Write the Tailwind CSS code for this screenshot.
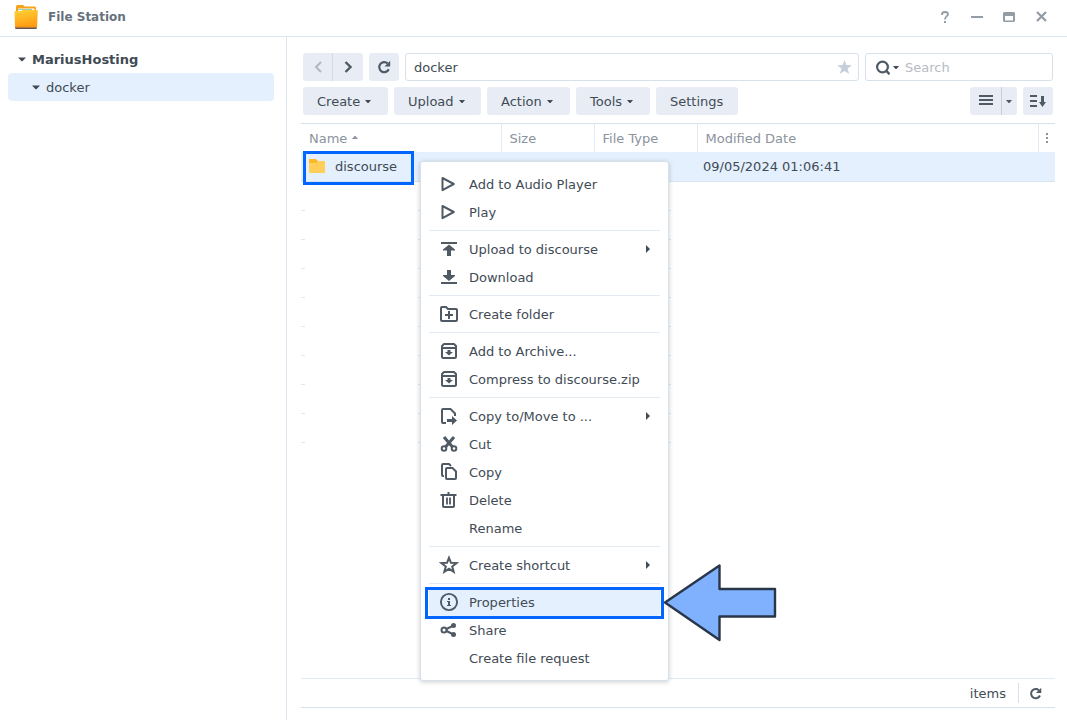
<!DOCTYPE html>
<html lang="en">
<head>
<meta charset="utf-8">
<meta name="viewport" content="width=device-width, initial-scale=1">
<title>File Station</title>
<script src="https://cdn.jsdelivr.net/npm/@tailwindcss/browser@4"></script>
</head>
<body class="relative flex h-screen flex-col overflow-hidden bg-white font-['Verdana','DejaVu_Sans',sans-serif] text-[13px] leading-7 text-[#414b55]">

<svg class="hidden" aria-hidden="true">
  <symbol id="caret" viewBox="0 0 6 3"><path d="M0 0h6L3.500 3h-1z" fill="currentColor"/></symbol>
  <symbol id="tree" viewBox="0 0 9 5"><path d="M0 0.300h9L5 4.500H4z" fill="currentColor"/></symbol>
  <symbol id="reload" viewBox="0 0 14 14"><path d="M11.800 9.200A5 5 0 1 1 10.600 3.400" fill="none" stroke="currentColor" stroke-width="2.200"/><path d="M13.200 0.800V6.500H7.500z" fill="currentColor"/></symbol>
  <symbol id="play" viewBox="0 0 20 20"><path d="M3.500 4v12.200L14.800 10z" fill="none" stroke="currentColor" stroke-width="2" stroke-linejoin="round"/></symbol>
  <symbol id="archive" viewBox="0 0 20 20"><path d="M5 3h10l2 2v10.500a1.500 1.500 0 0 1-1.500 1.500h-11A1.500 1.500 0 0 1 3 15.500V5z M3 7h14" fill="none" stroke="currentColor" stroke-width="2" stroke-linejoin="round"/><path d="M8.500 9h3v2H14l-4 3.500L6 11h2.500z" fill="currentColor"/></symbol>
</svg>

<header class="flex h-[37px] shrink-0 items-center border-b border-[#dde5ee] pl-3.5 pr-[18px]">
  <svg class="mt-[-3px] h-[26px] w-6" viewBox="0 0 24 26" aria-hidden="true">
    <defs><linearGradient id="fg" x1="0" y1="0" x2=".3" y2="1"><stop offset="0" stop-color="#ffd338"/><stop offset="1" stop-color="#ff9c14"/></linearGradient></defs>
    <path d="M2 2.500Q2 1 3.500 1H9q1 0 1.500 1.500H21q1 0 1 1.500v6H2z" fill="#f7a21b"/>
    <path d="M4 4.500h16.500V9H4z" fill="#fff"/><path d="M4 5.500h14" stroke="#8ed0b8"/>
    <path d="M0.500 8q0-1 1-1H7l2-1h14q1 0 .8 1.500L23 23.500H1z" fill="url(#fg)"/>
    <path d="M1 22.500h22v1H1z" fill="#ef8a10"/><path d="M1 23.500h22l-.5 1.500h-21z" fill="#6b5143"/>
  </svg>
  <h1 class="ml-2.5 mt-[-3px] text-xs font-bold text-[#66717c]">File Station</h1>
  <div class="mt-[-3px] ml-auto flex items-center gap-4 text-[#949ca6]">
    <button class="flex size-4 items-center justify-center" aria-label="Help"><svg class="h-3 w-2" viewBox="0 0 8 12"><path d="M1 4V3.500C1 1.800 2.200 1 4 1s3 .8 3 2.300C7 5.200 4 5.200 4 8.500" fill="none" stroke="currentColor" stroke-width="1.800"/><path d="M3 10h2v2H3z" fill="currentColor"/></svg></button>
    <button class="flex size-4 items-center justify-center" aria-label="Minimize"><span class="h-0.5 w-3 bg-current"></span></button>
    <button class="flex size-4 items-center justify-center" aria-label="Maximize"><svg class="h-2.5 w-3" viewBox="0 0 12 10"><path d="M1 0h10l1 1v8l-1 1H1L0 9V1zM2 4v4.500h8V4z" fill="currentColor" fill-rule="evenodd"/></svg></button>
    <button class="flex size-4 items-center justify-center" aria-label="Close"><svg class="size-[11px]" viewBox="0 0 11 11"><path d="M1 1l9 9M10 1L1 10" stroke="currentColor" stroke-width="2.300"/></svg></button>
  </div>
</header>

<div class="flex min-h-0 flex-1">
  <nav class="w-[287px] shrink-0 border-r border-[#dde5ee] px-2 pt-2" aria-label="Folders">
    <button class="flex h-7 w-full items-center gap-1.5 pl-2.5 font-bold"><svg class="h-[5px] w-2" aria-hidden="true"><use href="#tree"/></svg><span class="pt-0.5">MariusHosting</span></button>
    <button class="flex h-7 w-[266px] items-center gap-1.5 rounded bg-[#e4f0fd] pl-6"><svg class="h-[5px] w-2" aria-hidden="true"><use href="#tree"/></svg><span class="pt-0.5">docker</span></button>
  </nav>

  <main class="flex min-w-0 flex-1 flex-col pb-3 pl-3.5 pr-3 pt-4">
    <div class="flex gap-1.5 px-0.5">
      <div class="flex h-7 overflow-hidden rounded-[3px] bg-[#e8edf5]">
        <button class="flex w-[30px] items-center justify-center border-r border-[#d2dbe6] text-[#b0b7c1]" aria-label="Back"><svg class="h-3 w-2" viewBox="0 0 8 12"><path d="M7 1L2 6l5 5" fill="none" stroke="currentColor" stroke-width="2"/></svg></button>
        <button class="flex w-[30px] items-center justify-center" aria-label="Forward"><svg class="h-3 w-2" viewBox="0 0 8 12"><path d="M1.500 1l5 5-5 5" fill="none" stroke="#505a64" stroke-width="2.400"/></svg></button>
      </div>
      <button class="flex h-7 w-[30px] items-center justify-center rounded-[3px] bg-[#e8edf5] text-[#505a64]" aria-label="Reload"><svg class="size-3.5"><use href="#reload"/></svg></button>
      <div class="flex h-7 min-w-0 flex-1 items-center rounded-[3px] border border-[#d7e1eb] pl-2 pr-1.5">
        <input class="min-w-0 flex-1 bg-transparent pt-0.5 outline-none" aria-label="Path" value="docker">
        <button class="text-[#c6d0dc]" aria-label="Favorite"><svg class="h-3.5 w-[15px]" viewBox="0 0 16 15"><path d="M8 0l2 5.400 6 .2-4.700 3.600L13 15l-5-3.300L3 15l1.700-5.800L0 5.600l6-.2z" fill="currentColor"/></svg></button>
      </div>
      <div class="flex h-7 w-[188px] items-center rounded-[3px] border border-[#d7e1eb] pl-2.5 pr-2">
        <button class="flex items-center gap-[3px]" aria-label="Search options"><svg class="h-[15px] w-3.5" viewBox="0 0 14 15" fill="none" stroke="#505a64"><circle cx="6.500" cy="7" r="5.400" stroke-width="2.200"/><path d="M10 10.500l3.500 3.800" stroke-width="2.400"/></svg><svg class="h-[3px] w-1.5"><use href="#caret"/></svg></button>
        <input class="ml-1.5 min-w-0 flex-1 bg-transparent pt-0.5 outline-none placeholder:text-[#b6bcc2]" type="search" aria-label="Search" placeholder="Search">
      </div>
    </div>

    <div class="mt-1.5 flex gap-1.5 px-0.5">
      <button class="flex h-7 w-[85px] items-center gap-[5px] rounded-[3px] bg-[#e8edf5] pl-3.5"><span class="pt-0.5">Create</span><svg class="h-[3px] w-1.5"><use href="#caret"/></svg></button>
      <button class="flex h-7 w-[87px] items-center gap-[5px] rounded-[3px] bg-[#e8edf5] pl-3.5"><span class="pt-0.5">Upload</span><svg class="h-[3px] w-1.5"><use href="#caret"/></svg></button>
      <button class="flex h-7 w-[83px] items-center gap-[5px] rounded-[3px] bg-[#e8edf5] pl-3.5"><span class="pt-0.5">Action</span><svg class="h-[3px] w-1.5"><use href="#caret"/></svg></button>
      <button class="flex h-7 w-[74px] items-center gap-[5px] rounded-[3px] bg-[#e8edf5] pl-3.5"><span class="pt-0.5">Tools</span><svg class="h-[3px] w-1.5"><use href="#caret"/></svg></button>
      <button class="flex h-7 w-[82px] items-center rounded-[3px] bg-[#e8edf5] px-3.5"><span class="pt-0.5">Settings</span></button>
      <div class="ml-auto flex h-7 overflow-hidden rounded-[3px] bg-[#e8edf5] text-[#505a64]">
        <button class="flex w-8 items-center justify-center border-r border-[#c8d0da]" aria-label="List view"><svg class="mb-0.5 h-2.5 w-3.5" viewBox="0 0 14 10"><path d="M0 1h14M0 5h14M0 9h14" stroke="currentColor" stroke-width="2"/></svg></button>
        <button class="flex w-[15px] items-center pl-1" aria-label="View options"><svg class="h-[3px] w-1.5"><use href="#caret"/></svg></button>
      </div>
      <button class="flex h-7 w-[30px] items-center justify-center rounded-[3px] bg-[#e8edf5] text-[#505a64]" aria-label="Sort"><svg class="h-3 w-4" viewBox="0 0 16 12"><path d="M0 1h7M0 6h7M0 11h7" stroke="currentColor" stroke-width="2"/><path d="M11 1h3v6h2l-3.500 5L9 7h2z" fill="currentColor"/></svg></button>
    </div>

    <table class="mt-2 w-full table-fixed border-collapse text-left leading-6">
      <colgroup><col class="w-[200px]"><col class="w-[93px]"><col class="w-[103px]"><col><col class="w-[17px]"></colgroup>
      <thead class="border-t border-[#d7e1eb] text-[#8b939c]">
        <tr class="h-7">
          <th class="border-r border-[#e4eaf1] pl-2 pt-0.5 font-normal"><span class="flex items-center gap-[5px]">Name<svg class="mb-0.5 h-[3px] w-1.5 rotate-180"><use href="#caret"/></svg></span></th>
          <th class="border-r border-[#e4eaf1] pl-2 pt-0.5 font-normal">Size</th>
          <th class="border-r border-[#e4eaf1] pl-2 pt-0.5 font-normal">File Type</th>
          <th class="border-r border-[#e4eaf1] pl-2 pt-0.5 font-normal">Modified Date</th>
          <th class="font-normal"><button class="flex w-full justify-center" aria-label="Columns"><svg class="h-2.5 w-0.5" viewBox="0 0 2 10"><path d="M0 0h2v2H0zM0 4h2v2H0zM0 8h2v2H0z" fill="currentColor"/></svg></button></th>
        </tr>
      </thead>
      <tbody>
        <tr class="h-[30px] border-b border-[#d7e4f1] bg-[#e4f0fd]">
          <td class="pl-2"><span class="flex items-center gap-2.5"><svg class="h-3.5 w-4" viewBox="0 0 16 14" aria-hidden="true"><path d="M0 0h7l2 2h7v4H0z" fill="#fdb928"/><path d="M0 4h7l2-2h7v12H0z" fill="#ffcf5a"/></svg><span class="pt-0.5">discourse</span></span></td>
          <td></td><td></td>
          <td class="pl-1.5 pt-0.5">09/05/2024 01:06:41</td>
          <td></td>
        </tr>
      </tbody>
    </table>

    <!-- Remaining empty row rules -->
    <div class="flex min-h-0 flex-1 flex-col overflow-hidden" aria-hidden="true">
      <div class="flex h-[29px] shrink-0 items-end"><i class="h-px w-1 bg-[#e0e7ef]"></i><i class="ml-[113px] h-px w-[253px] bg-[#e0e7ef]"></i></div>
      <div class="flex h-[29px] shrink-0 items-end"><i class="h-px w-1 bg-[#e0e7ef]"></i><i class="ml-[113px] h-px w-[253px] bg-[#e0e7ef]"></i></div>
      <div class="flex h-[29px] shrink-0 items-end"><i class="h-px w-1 bg-[#e0e7ef]"></i><i class="ml-[113px] h-px w-[253px] bg-[#e0e7ef]"></i></div>
      <div class="flex h-[29px] shrink-0 items-end"><i class="h-px w-1 bg-[#e0e7ef]"></i><i class="ml-[113px] h-px w-[253px] bg-[#e0e7ef]"></i></div>
      <div class="flex h-[29px] shrink-0 items-end"><i class="h-px w-1 bg-[#e0e7ef]"></i><i class="ml-[113px] h-px w-[253px] bg-[#e0e7ef]"></i></div>
      <div class="flex h-[29px] shrink-0 items-end"><i class="h-px w-1 bg-[#e0e7ef]"></i><i class="ml-[113px] h-px w-[253px] bg-[#e0e7ef]"></i></div>
      <div class="flex h-[29px] shrink-0 items-end"><i class="h-px w-1 bg-[#e0e7ef]"></i><i class="ml-[113px] h-px w-[253px] bg-[#e0e7ef]"></i></div>
      <div class="flex h-[29px] shrink-0 items-end"><i class="h-px w-1 bg-[#e0e7ef]"></i><i class="ml-[113px] h-px w-[253px] bg-[#e0e7ef]"></i></div>
      <div class="flex h-[29px] shrink-0 items-end"><i class="h-px w-1 bg-[#e0e7ef]"></i><i class="ml-[113px] h-px w-[253px] bg-[#e0e7ef]"></i></div>
    </div>

    <footer class="flex h-[30px] shrink-0 items-center justify-end border-b border-t border-b-[#d7e1eb] border-t-[#e4eaf1] pr-[13px]">
      <span class="pt-0.5">items</span>
      <span class="ml-3 mr-2.5 h-5 w-px bg-[#d7e1eb]"></span>
      <button class="text-[#505a64]" aria-label="Refresh"><svg class="size-[13px]"><use href="#reload"/></svg></button>
    </footer>
  </main>
</div>

<div class="absolute left-[303px] top-[151px] h-[34px] w-[111px] border-[3px] border-[#0066ff]"></div>

<div role="menu" class="absolute left-[420px] top-[161px] w-[249px] rounded-[3px] border border-[#d7e1eb] bg-white p-2 shadow-[0_1px_5px_rgba(0,0,0,0.2)]">
  <button role="menuitem" class="flex h-7 w-full items-center gap-2.5 pl-2.5"><svg class="size-5 text-[#505a64]"><use href="#play"/></svg><span class="pt-0.5">Add to Audio Player</span></button>
  <button role="menuitem" class="flex h-7 w-full items-center gap-2.5 pl-2.5"><svg class="size-5 text-[#505a64]"><use href="#play"/></svg><span class="pt-0.5">Play</span></button>
  <hr class="my-1 border-[#e4eaf1]">
  <button role="menuitem" class="flex h-7 w-full items-center gap-2.5 pl-2.5 pr-2.5"><svg class="size-5" viewBox="0 0 20 20"><path d="M2 3h16v2H2zM10 5.500l6 5v1h-4V17H8v-5.500H4v-1z" fill="#505a64"/></svg><span class="pt-0.5">Upload to discourse</span><svg class="ml-auto h-2 w-1" viewBox="0 0 4 8"><path d="M0 0l4 4-4 4z" fill="#414b55"/></svg></button>
  <button role="menuitem" class="flex h-7 w-full items-center gap-2.5 pl-2.5"><svg class="size-5" viewBox="0 0 20 20"><path d="M2 15h16v2H2zM8 3h4v5h4v1l-6 5-6-5V8h4z" fill="#505a64"/></svg><span class="pt-0.5">Download</span></button>
  <hr class="my-1 border-[#e4eaf1]">
  <button role="menuitem" class="flex h-7 w-full items-center gap-2.5 pl-2.5"><svg class="size-5" viewBox="0 0 20 20" fill="none" stroke="#505a64" stroke-width="2"><path d="M2 16V4q0-1 1-1h4l2 2h8q1 0 1 1v10q0 1-1 1H3q-1 0-1-1zM10 7v8M6 11h8" stroke-linejoin="round"/></svg><span class="pt-0.5">Create folder</span></button>
  <hr class="my-1 border-[#e4eaf1]">
  <button role="menuitem" class="flex h-7 w-full items-center gap-2.5 pl-2.5"><svg class="size-5 text-[#505a64]"><use href="#archive"/></svg><span class="pt-0.5">Add to Archive...</span></button>
  <button role="menuitem" class="flex h-7 w-full items-center gap-2.5 pl-2.5"><svg class="size-5 text-[#505a64]"><use href="#archive"/></svg><span class="pt-0.5">Compress to discourse.zip</span></button>
  <hr class="my-1 border-[#e4eaf1]">
  <button role="menuitem" class="flex h-7 w-full items-center gap-2.5 pl-2.5 pr-2.5"><svg class="size-5" viewBox="0 0 20 20"><path d="M7 17H4q-1 0-1-1V4q0-1 1-1h7.500L16 7.500V10" fill="none" stroke="#505a64" stroke-width="2"/><path d="M8 13h5v-3l5 4.500-5 4.500v-3H8z" fill="#505a64"/></svg><span class="pt-0.5">Copy to/Move to ...</span><svg class="ml-auto h-2 w-1" viewBox="0 0 4 8"><path d="M0 0l4 4-4 4z" fill="#414b55"/></svg></button>
  <button role="menuitem" class="flex h-7 w-full items-center gap-2.5 pl-2.5"><svg class="size-5" viewBox="0 0 20 20" fill="none" stroke="#505a64"><circle cx="5" cy="14.500" r="2.300" stroke-width="2"/><circle cx="15" cy="14.500" r="2.300" stroke-width="2"/><path d="M5 3l8.500 10M15 3L6.500 13" stroke-width="3"/></svg><span class="pt-0.5">Cut</span></button>
  <button role="menuitem" class="flex h-7 w-full items-center gap-2.5 pl-2.5"><svg class="size-5" viewBox="0 0 20 20" fill="none" stroke="#505a64" stroke-width="2"><path d="M5 14H4q-1 0-1-1V3q0-1 1-1h6l2 2M7 16V7q0-1 1-1h5.500L17 9.500V16q0 1-1 1H8q-1 0-1-1z"/></svg><span class="pt-0.5">Copy</span></button>
  <button role="menuitem" class="flex h-7 w-full items-center gap-2.5 pl-2.5"><svg class="size-5" viewBox="0 0 20 20" fill="none" stroke="#505a64" stroke-width="2"><path d="M1.500 5h16M9.500 2v3M4 5v11q0 1 1 1h9q1 0 1-1V5"/><path d="M8 7.500v7M11 7.500v7" stroke-width="1.800"/></svg><span class="pt-0.5">Delete</span></button>
  <button role="menuitem" class="flex h-7 w-full items-center pl-10"><span class="pt-0.5">Rename</span></button>
  <hr class="my-1 border-[#e4eaf1]">
  <button role="menuitem" class="flex h-7 w-full items-center gap-2.5 pl-2.5 pr-2.5"><svg class="size-5" viewBox="0 0 20 20"><path d="M10 2.800l2 5 5.500.3-4.300 3.400 1.500 5.300L10 13.800l-4.700 3 1.500-5.300L2.500 8.100 8 7.800z" fill="none" stroke="#505a64" stroke-width="2"/></svg><span class="pt-0.5">Create shortcut</span><svg class="ml-auto h-2 w-1" viewBox="0 0 4 8"><path d="M0 0l4 4-4 4z" fill="#414b55"/></svg></button>
  <hr class="my-1 border-[#e4eaf1]">
  <button role="menuitem" class="flex h-7 w-full items-center gap-2.5 rounded-[3px] bg-[#e4f0fd] pl-2.5"><svg class="size-5" viewBox="0 0 20 20"><circle cx="10" cy="10" r="8.100" fill="none" stroke="#505a64" stroke-width="1.900"/><path d="M9 6h2v2H9zM8 9h3v4h1v1H8v-1h1v-3H8z" fill="#505a64"/></svg><span class="pt-0.5">Properties</span></button>
  <button role="menuitem" class="flex h-7 w-full items-center gap-2.5 pl-2.5"><svg class="size-5" viewBox="0 0 20 20"><circle cx="5" cy="10" r="2.500" fill="none" stroke="#505a64" stroke-width="2"/><path d="M7.500 9l7-3.500M7.500 11l7 3.500" stroke="#505a64" stroke-width="2"/><circle cx="14.500" cy="5.500" r="2.500" fill="#505a64"/><circle cx="14.500" cy="14.500" r="2.500" fill="#505a64"/></svg><span class="pt-0.5">Share</span></button>
  <button role="menuitem" class="flex h-7 w-full items-center pl-10"><span class="pt-0.5">Create file request</span></button>
</div>

<div class="absolute left-[425px] top-[587px] h-8 w-[239px] border-[3px] border-[#0066ff]"></div>
<svg class="absolute left-[662px] top-[562px] h-[82px] w-[116px]" viewBox="0 0 116 82" aria-hidden="true"><path d="M3 40.500L57.500 3.500V27H113V54.500H57.500V78z" fill="#80b1ff" stroke="#293548" stroke-width="2.400" stroke-linejoin="round"/></svg>
</body>
</html>
